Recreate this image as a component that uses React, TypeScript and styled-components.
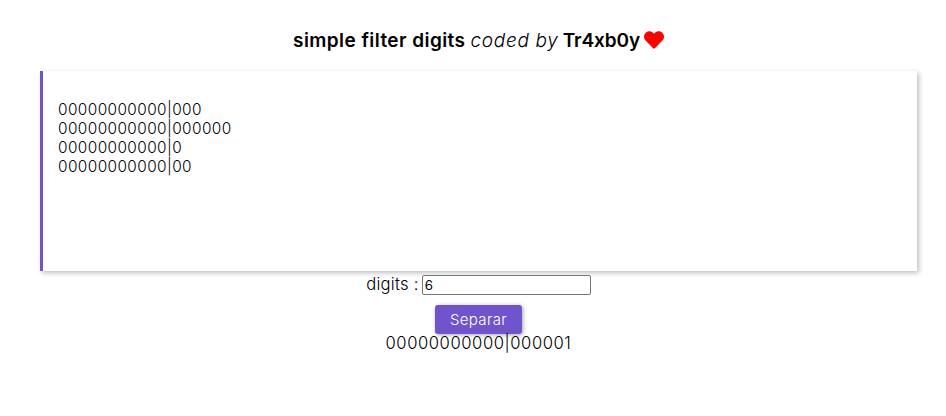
import React from 'react';
import styled, { createGlobalStyle } from 'styled-components';

const GlobalStyle = createGlobalStyle`
  * { box-sizing: border-box; }
  body {
    margin: 0;
    background: #fff;
    color: #000;
    font-family: Inter, sans-serif;
    font-weight: 350;
  }
`;

const Page = styled.main`
  display: flex;
  flex-direction: column;
  align-items: center;
  padding: 29px 29px 0 40px;
`;

const Title = styled.h1`
  display: flex;
  align-items: center;
  height: 24px;
  margin: 0 0 18px;
  font-size: 19px;
  line-height: 24px;
  font-weight: 600;
  white-space: pre;
`;

const Name = styled.span<{ $spacing: number }>`
  letter-spacing: ${p => p.$spacing}px;
`;

const Credit = styled.em`
  margin: 0 4px 0 5px;
  font-weight: 300;
  letter-spacing: 0.7px;
`;

const Heart = styled.svg`
  width: 20px;
  height: 20px;
  margin: -2px 0 0 4px;
  fill: #f00;
`;

const Digits = styled.div<{ $size: number; $spacing: number }>`
  font-size: ${p => p.$size}px;
  line-height: 19px;
  letter-spacing: ${p => p.$spacing}px;
  white-space: pre;
`;

const Panel = styled(Digits)`
  width: 100%;
  height: 200px;
  padding: 29px 15px;
  background: #fff;
  border-left: 3px solid #7153cc;
  box-shadow: 2px 2px 5px rgba(0, 0, 0, 0.25);
`;

const Field = styled.label`
  display: flex;
  align-items: center;
  height: 20px;
  margin-top: 4px;
  font-size: 16.6px;
  line-height: 18px;
  letter-spacing: 0.28px;
`;

const Caption = styled.span`
  margin-top: -2px;
`;

const Input = styled.input`
  width: 169px;
  height: 20px;
  margin-left: 3px;
  padding: 1px 2px;
  border: 1px solid #767676;
  border-radius: 2px;
  background: #fff;
  color: #000;
  font: 400 13.3px Inter, sans-serif;
`;

const Button = styled.button`
  width: 87px;
  height: 29px;
  margin-top: 10px;
  padding: 0;
  border: 0;
  border-radius: 3px;
  background: #7153cc;
  box-shadow: 1px 1px 4px rgba(0, 0, 0, 0.35);
  color: #fff;
  font: 350 15px/29px Inter, sans-serif;
  letter-spacing: 0.35px;
`;

const entries = ['00000000000|000', '00000000000|000000', '00000000000|0', '00000000000|00'];

export default function App() {
  return (
    <Page>
      <GlobalStyle />
      <Title>
        <Name $spacing={0.43}>simple filter digits</Name>
        <Credit>coded by</Credit>
        <Name $spacing={-0.1}>Tr4xb0y</Name>
        <Heart viewBox="0 0 512 512">
          <path d="M462.3 62.6C407.5 15.9 326 24.3 275.7 76.2L256 96.5l-19.7-20.3C186.1 24.3 104.5 15.9 49.7 62.6c-62.8 53.6-66.1 149.8-9.9 207.9l193.5 199.8c12.5 12.9 32.8 12.9 45.3 0l193.5-199.8c56.3-58.1 53-154.3-9.8-207.9z" />
        </Heart>
      </Title>
      <Panel $size={15.4} $spacing={0.4}>{entries.join('\n')}</Panel>
      <Field>
        <Caption>digits :</Caption>
        <Input defaultValue="6" />
      </Field>
      <Button>Separar</Button>
      <Digits $size={16.6} $spacing={0.57}>00000000000|000001</Digits>
    </Page>
  );
}
